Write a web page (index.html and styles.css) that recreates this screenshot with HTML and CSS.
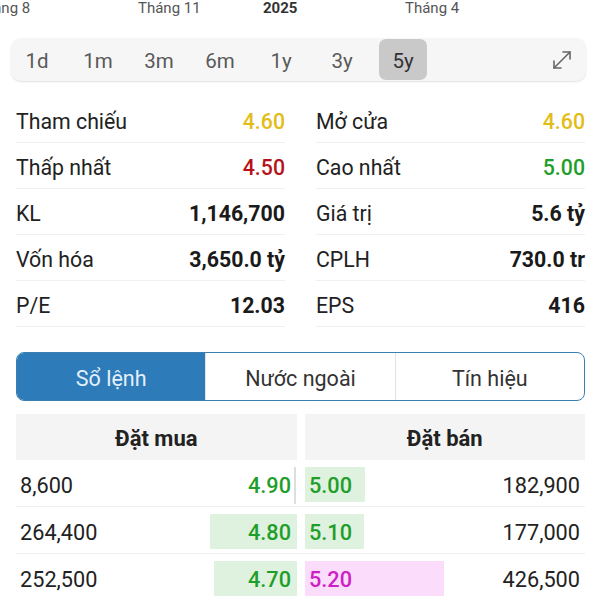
FILE: index.html
```html
<!DOCTYPE html>
<html lang="vi">
<head>
    <meta charset="UTF-8">
    <meta name="viewport" content="width=device-width, initial-scale=1.0">
    <title>Chi tiết cổ phiếu</title>
    <link rel="stylesheet" href="styles.css">
</head>
<body>
    <!-- trục thời gian của biểu đồ -->
    <div class="axis">
        <span class="axis-label" style="left: -24px">Tháng 8</span>
        <span class="axis-label" style="left: 138px">Tháng 11</span>
        <span class="axis-label year" style="left: 263px">2025</span>
        <span class="axis-label" style="left: 405px">Tháng 4</span>
    </div>

    <div class="container">
        <!-- chọn khoảng thời gian -->
        <div class="period-bar">
            <span class="period">1d</span>
            <span class="period">1m</span>
            <span class="period">3m</span>
            <span class="period">6m</span>
            <span class="period">1y</span>
            <span class="period">3y</span>
            <span class="period active">5y</span>
            <span class="expand">
                <svg width="22" height="22" viewBox="0 0 22 22" fill="none" stroke="#666" stroke-width="1.6" stroke-linecap="round" stroke-linejoin="round">
                    <path d="M3 19 L19 3"/>
                    <path d="M12 3 H19 V10"/>
                    <path d="M3 12 V19 H10"/>
                </svg>
            </span>
        </div>

        <!-- thông tin giá -->
        <div class="stats">
            <div class="stat-row"><span class="stat-label">Tham chiếu</span><span class="stat-value ref">4.60</span></div>
            <div class="stat-row"><span class="stat-label">Mở cửa</span><span class="stat-value ref">4.60</span></div>
            <div class="stat-row"><span class="stat-label">Thấp nhất</span><span class="stat-value down">4.50</span></div>
            <div class="stat-row"><span class="stat-label">Cao nhất</span><span class="stat-value up">5.00</span></div>
            <div class="stat-row"><span class="stat-label">KL</span><span class="stat-value strong">1,146,700</span></div>
            <div class="stat-row"><span class="stat-label">Giá trị</span><span class="stat-value strong">5.6 tỷ</span></div>
            <div class="stat-row"><span class="stat-label">Vốn hóa</span><span class="stat-value strong">3,650.0 tỷ</span></div>
            <div class="stat-row"><span class="stat-label">CPLH</span><span class="stat-value strong">730.0 tr</span></div>
            <div class="stat-row"><span class="stat-label">P/E</span><span class="stat-value strong">12.03</span></div>
            <div class="stat-row"><span class="stat-label">EPS</span><span class="stat-value strong">416</span></div>
        </div>

        <!-- tab -->
        <div class="tabs">
            <div class="tab active">Sổ lệnh</div>
            <div class="tab">Nước ngoài</div>
            <div class="tab">Tín hiệu</div>
        </div>

        <!-- sổ lệnh -->
        <div class="book-head">
            <div class="book-title">Đặt mua</div>
            <div class="book-title">Đặt bán</div>
        </div>

        <div class="book-row">
            <div class="bid">
                <span class="qty">8,600</span>
                <span class="price-bar tick-bar"></span>
                <span class="price up">4.90</span>
            </div>
            <div class="ask">
                <span class="price-bar up-bar" style="width: 60px"></span>
                <span class="price up">5.00</span>
                <span class="qty">182,900</span>
            </div>
        </div>
        <div class="book-row">
            <div class="bid">
                <span class="qty">264,400</span>
                <span class="price-bar up-bar" style="width: 87px"></span>
                <span class="price up">4.80</span>
            </div>
            <div class="ask">
                <span class="price-bar up-bar" style="width: 59px"></span>
                <span class="price up">5.10</span>
                <span class="qty">177,000</span>
            </div>
        </div>
        <div class="book-row">
            <div class="bid">
                <span class="qty">252,500</span>
                <span class="price-bar up-bar" style="width: 83px"></span>
                <span class="price up">4.70</span>
            </div>
            <div class="ask">
                <span class="price-bar ceil-bar" style="width: 139px"></span>
                <span class="price ceil">5.20</span>
                <span class="qty">426,500</span>
            </div>
        </div>
    </div>
</body>
</html>
```

FILE: styles.css
```css
* {
    margin: 0;
    padding: 0;
    box-sizing: border-box;
}

body {
    font-family: Roboto, "Noto Sans", sans-serif;
    background: white;
    color: #222;
    overflow: hidden;
}

.axis {
    position: relative;
    height: 16px;
}

.axis-label {
    position: absolute;
    top: 0;
    font-size: 15px;
    line-height: 16px;
    color: #555;
    white-space: nowrap;
}

.axis-label.year {
    font-weight: bold;
    color: #333;
}

.container {
    padding: 0 15px 0 16px;
}

.period-bar {
    display: flex;
    align-items: center;
    gap: 13px;
    height: 43px;
    margin: 22px -1px 0 -5px;
    padding: 1px 2px;
    background: #f6f6f6;
    border-radius: 10px;
    box-shadow: 0 1px 2px rgba(0,0,0,0.12);
}

.period {
    width: 48px;
    height: 41px;
    display: flex;
    align-items: center;
    justify-content: center;
    padding-top: 2px;
    font-size: 20.5px;
    color: #5a5a5a;
    border-radius: 7px;
}

.period.active {
    background: #c9c9c9;
    color: #333;
}

.expand {
    margin-left: auto;
    margin-right: 11px;
    display: flex;
}

.stats {
    display: grid;
    grid-template-columns: 1fr 1fr;
    column-gap: 31px;
    margin-top: 16px;
}

.stat-row {
    display: flex;
    justify-content: space-between;
    align-items: center;
    height: 46px;
    padding-top: 4px;
    border-bottom: 1px solid #efefef;
    font-size: 21.3px;
}

.stat-label {
    color: #222;
}

.stat-value {
    font-weight: 500;
}

.stat-value.strong {
    font-weight: bold;
    color: #1a1a1a;
}

.ref {
    color: #e3bd17;
}

.down {
    color: #b5121b;
}

.up {
    color: #1f9e2a;
}

.tabs {
    display: flex;
    height: 49px;
    margin-top: 25px;
    border: 1.5px solid #3b7fb2;
    border-radius: 8px;
    overflow: hidden;
}

.tab {
    flex: 1;
    display: flex;
    align-items: center;
    justify-content: center;
    padding-top: 3px;
    font-size: 21.5px;
    color: #333;
    border-left: 1px solid #e2e2e2;
}

.tab:first-child {
    border-left: none;
}

.tab.active {
    background: #2d7bb8;
    color: #e4f0fb;
}

.book-head {
    display: flex;
    gap: 8px;
    margin-top: 13px;
}

.book-title {
    flex: 1;
    height: 46px;
    display: flex;
    align-items: center;
    justify-content: center;
    padding-top: 2px;
    background: #f4f4f4;
    font-size: 22px;
    font-weight: bold;
    color: #222;
}

.book-row {
    display: flex;
    gap: 8px;
    height: 47px;
    padding-top: 5px;
    border-bottom: 1px solid #efefef;
    font-size: 21.7px;
}

.bid,
.ask {
    flex: 1;
    position: relative;
    display: flex;
    align-items: center;
}

.bid {
    justify-content: space-between;
    padding: 0 6px 0 4px;
}

.ask {
    padding: 0 5px 0 4px;
}

.ask .qty {
    margin-left: auto;
}

.qty {
    color: #222;
}

.price {
    position: relative;
    font-weight: 500;
}

/* thanh khối lượng phía sau giá */
.price-bar {
    position: absolute;
    top: 2px;
    bottom: 4px;
}

.bid .price-bar {
    right: 0;
}

.ask .price-bar {
    left: 0;
}

.up-bar {
    background: #dff1df;
}

.ceil-bar {
    background: #fcdcfb;
}

.bid .tick-bar {
    right: 1px;
    top: 2px;
    bottom: 2px;
    width: 2px;
    background: #dedede;
}

.ceil {
    color: #cc1fc4;
}
```
